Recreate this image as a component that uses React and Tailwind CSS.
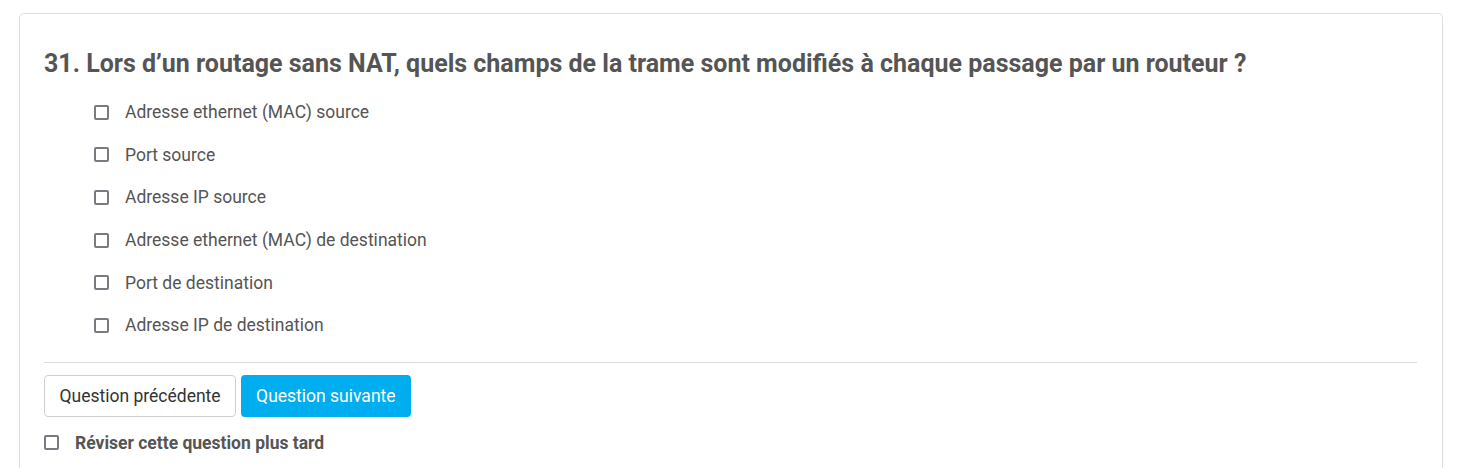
import { useState } from 'react';

const options = [
  'Adresse ethernet (MAC) source',
  'Port source',
  'Adresse IP source',
  'Adresse ethernet (MAC) de destination',
  'Port de destination',
  'Adresse IP de destination',
];

function Box({ checked, onChange }) {
  return (
    <input
      type="checkbox"
      checked={checked}
      onChange={onChange}
      className="appearance-none w-[15px] h-[15px] border-2 border-[#7a7a82] rounded-[2px] bg-white checked:bg-[#00aeef] checked:border-[#00aeef] shrink-0 m-0"
    />
  );
}

export default function App() {
  const [checked, setChecked] = useState({});
  const [review, setReview] = useState(false);

  return (
    <div className="bg-white min-h-[468px] pt-[13px] pl-[19px] pr-[21px] font-['Roboto',sans-serif]">
      <div className="border border-[#dedede] border-b-0 rounded-t-[5px] bg-white px-[24px] pb-[14px]">
        {/* Question */}
        <h2 className="pt-[35px] text-[25px] leading-[30px] font-bold text-[#555]">
          31. Lors d’un routage sans NAT, quels champs de la trame sont modifiés à chaque passage par un routeur ?
        </h2>

        {/* Options */}
        <ul className="mt-[12px] pl-[50px]">
          {options.map((opt, i) => (
            <li key={opt} className="flex items-center h-[42.6px]">
              <Box
                checked={!!checked[i]}
                onChange={() => setChecked({ ...checked, [i]: !checked[i] })}
              />
              <span className="ml-[16px] text-[17.5px] text-[#555]">{opt}</span>
            </li>
          ))}
        </ul>

        <div className="mt-[15px] border-t border-[#dcdcdc] mr-[1px]" />

        {/* Navigation */}
        <div className="flex gap-[5px] mt-[12px]">
          <button className="h-[42px] pt-[2px] px-[14.5px] border border-[#cfcfcf] rounded-[4px] bg-white text-[17.5px] text-[#333]">
            Question précédente
          </button>
          <button className="h-[42px] pt-[2px] px-[15px] rounded-[4px] bg-[#00aeef] text-[17.5px] text-white">
            Question suivante
          </button>
        </div>

        <label className="flex items-center mt-[13px]">
          <Box checked={review} onChange={() => setReview(!review)} />
          <span className="ml-[16px] text-[17.5px] font-bold text-[#555]">Réviser cette question plus tard</span>
        </label>
      </div>
    </div>
  );
}
